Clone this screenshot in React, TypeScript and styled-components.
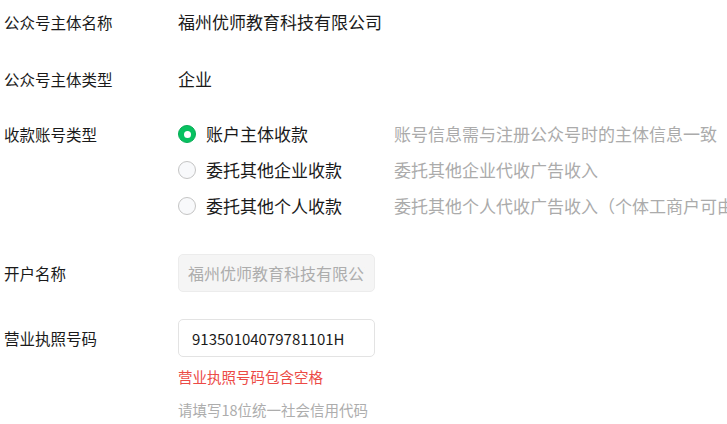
import styled, { createGlobalStyle } from 'styled-components'

const GlobalStyle = createGlobalStyle`
  html, body {
    margin: 0;
    padding: 0;
    background: #ffffff;
    overflow: hidden;
  }
  body {
    font-family: "Noto Sans CJK SC", "Noto Sans", sans-serif;
    color: #1a1a1a;
  }
`

const Page = styled.div`
  width: 727px;
  height: 424px;
  padding: 10px 0 0 4px;
  box-sizing: border-box;
  overflow: hidden;
`

const Row = styled.div<{ $top: number; $align?: string }>`
  display: grid;
  grid-template-columns: 174px 1fr;
  align-items: ${({ $align }) => $align || 'center'};
  margin-top: ${({ $top }) => $top}px;
`

const Label = styled.div<{ $offset?: number }>`
  font-size: 15.5px;
  line-height: 24px;
  color: #1a1a1a;
  white-space: nowrap;
  margin-top: ${({ $offset }) => $offset || 0}px;
`

const Value = styled.div`
  font-size: 17px;
  line-height: 24px;
  color: #1a1a1a;
  white-space: nowrap;
`

const OptionList = styled.div`
  display: flex;
  flex-direction: column;
  gap: 12px;
`

const Option = styled.label`
  display: grid;
  grid-template-columns: 216px auto;
  align-items: center;
  white-space: nowrap;
  font-size: 17px;
  line-height: 24px;
`

const OptionMain = styled.span`
  display: flex;
  align-items: center;
  gap: 10px;
  color: #1a1a1a;
`

const OptionDesc = styled.span`
  color: #ababab;
`

const Radio = styled.span<{ $checked?: boolean }>`
  width: 18px;
  height: 18px;
  box-sizing: border-box;
  border-radius: 50%;
  flex: none;
  display: flex;
  align-items: center;
  justify-content: center;
  border: ${({ $checked }) => ($checked ? '1px solid #06ad56' : '1px solid #c4c4c4')};
  background: ${({ $checked }) => ($checked ? '#07c160' : '#f8f9fb')};

  &::after {
    content: '';
    display: ${({ $checked }) => ($checked ? 'block' : 'none')};
    width: 7px;
    height: 7px;
    border-radius: 50%;
    background: #ffffff;
  }
`

const Input = styled.input<{ $pad: number }>`
  width: 197px;
  height: 38px;
  box-sizing: border-box;
  border: 1px solid #e3e3e3;
  border-radius: 5px;
  padding: 0 ${({ $pad }) => $pad}px;
  font-family: "Noto Sans CJK SC", "Noto Sans", sans-serif;
  font-size: 15px;
  color: #1a1a1a;
  background: #ffffff;
  outline: none;

  &:disabled {
    font-size: 16px;
    background: #f5f5f5;
    border-color: #ececec;
    color: #adadad;
  }
`

const FieldCol = styled.div`
  display: flex;
  flex-direction: column;
`

const ErrorText = styled.div`
  margin-top: 10px;
  font-size: 14.5px;
  line-height: 20px;
  color: #ec4a46;
`

const HelpText = styled.div`
  margin-top: 13px;
  font-size: 14.5px;
  line-height: 20px;
  color: #adadad;
`

const options = [
  { name: '账户主体收款', desc: '账号信息需与注册公众号时的主体信息一致', checked: true },
  { name: '委托其他企业收款', desc: '委托其他企业代收广告收入', checked: false },
  { name: '委托其他个人收款', desc: '委托其他个人代收广告收入（个体工商户可由经营者代收）', checked: false },
]

export default function App() {
  return (
    <Page>
      <GlobalStyle />
      <Row $top={0}>
        <Label>公众号主体名称</Label>
        <Value>福州优师教育科技有限公司</Value>
      </Row>
      <Row $top={33}>
        <Label>公众号主体类型</Label>
        <Value>企业</Value>
      </Row>
      <Row $top={31} $align="start">
        <Label>收款账号类型</Label>
        <OptionList>
          {options.map((o) => (
            <Option key={o.name}>
              <OptionMain>
                <Radio $checked={o.checked} />
                {o.name}
              </OptionMain>
              <OptionDesc>{o.desc}</OptionDesc>
            </Option>
          ))}
        </OptionList>
      </Row>
      <Row $top={36}>
        <Label>开户名称</Label>
        <FieldCol>
          <Input $pad={9} disabled value="福州优师教育科技有限公司" readOnly />
        </FieldCol>
      </Row>
      <Row $top={27} $align="start">
        <Label $offset={7}>营业执照号码</Label>
        <FieldCol>
          <Input $pad={13} value="91350104079781101H" readOnly />
          <ErrorText>营业执照号码包含空格</ErrorText>
          <HelpText>请填写18位统一社会信用代码</HelpText>
        </FieldCol>
      </Row>
    </Page>
  )
}
